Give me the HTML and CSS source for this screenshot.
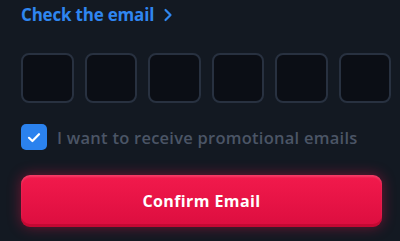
FILE: index.html
```html
<!DOCTYPE html>
<html>
<head>
<meta charset="utf-8">
<link rel="stylesheet" href="styles.css">
</head>
<body>
<div class="panel">
  <a class="check-link">Check the email
    <svg class="chev" width="10" height="14" viewBox="0 0 10 14"><path d="M2.5 2 L7.5 7 L2.5 12" fill="none" stroke="#2f86f0" stroke-width="2.2" stroke-linecap="round" stroke-linejoin="round"/></svg>
  </a>
  <div class="code-row">
    <div class="code-box"></div>
    <div class="code-box"></div>
    <div class="code-box"></div>
    <div class="code-box"></div>
    <div class="code-box"></div>
    <div class="code-box"></div>
  </div>
  <label class="promo">
    <span class="checkbox">
      <svg width="14" height="11" viewBox="0 0 14 11"><path d="M2 5.8 L5.4 9 L12 2.2" fill="none" stroke="#fff" stroke-width="2.2" stroke-linecap="round" stroke-linejoin="round"/></svg>
    </span>
    <span class="promo-text">I want to receive promotional emails</span>
  </label>
  <button class="confirm">Confirm Email</button>
</div>
</body>
</html>
```
FILE: styles.css
```css
html, body {
  margin: 0;
  padding: 0;
  background: #131922;
  width: 400px;
  height: 241px;
  overflow: hidden;
}
.panel {
  padding: 2px 0 0 21px;
  font-family: "Open Sans", sans-serif;
  display: flex;
  flex-direction: column;
}
.check-link {
  color: #2f86f0;
  font-size: 17px;
  font-weight: 700;
  display: flex;
  align-items: center;
  gap: 9px;
  height: 24px;
  letter-spacing: -0.2px;
}
.chev { margin-top: 1px; }
.code-row {
  display: flex;
  gap: 11px;
  width: 370px;
  margin-top: 27px;
}
.code-box {
  flex: 1;
  height: 50px;
  box-sizing: border-box;
  border: 2px solid #283140;
  border-radius: 8px;
  background: #0b0e15;
}
.promo {
  display: flex;
  align-items: center;
  gap: 10px;
  margin-top: 21px;
}
.checkbox {
  width: 26px;
  height: 26px;
  border-radius: 5px;
  background: #2b82ee;
  display: flex;
  align-items: center;
  justify-content: center;
}
.promo-text {
  color: #4b5566;
  font-size: 16.5px;
  font-weight: 600;
  letter-spacing: 0.25px;
}
.confirm {
  margin-top: 25px;
  width: 361px;
  height: 52px;
  border: none;
  border-radius: 9px;
  background: linear-gradient(180deg, #f21a4c 0%, #dc0d3f 100%);
  box-shadow: 0 0 14px rgba(230, 20, 70, 0.45), inset 0 -3px 0 rgba(150, 0, 30, 0.35), inset 0 2px 2px rgba(255, 255, 255, 0.15);
  color: #ffffff;
  font-family: "Open Sans", sans-serif;
  font-size: 16px;
  font-weight: 700;
  letter-spacing: 0.4px;
  padding: 0;
}
```
